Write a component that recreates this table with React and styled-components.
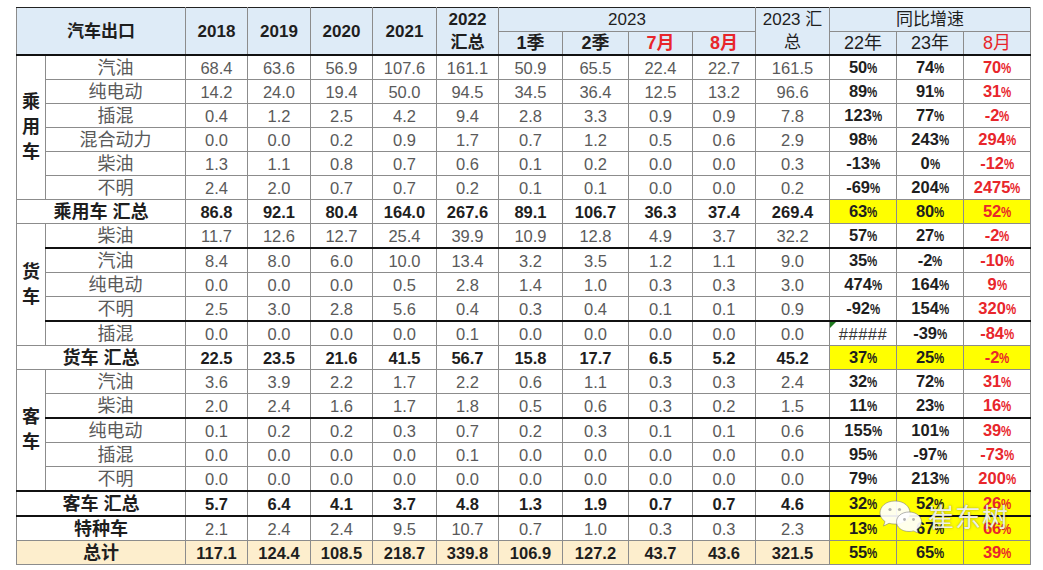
import React from 'react';
import styled, { createGlobalStyle } from 'styled-components';

const GlobalStyle = createGlobalStyle`
  html, body {
    margin: 0;
    padding: 0;
    background: #ffffff;
  }
`;

const RED = '#e8262b';
const GRID = '#8c8c8c';
const HEAD_BG = '#deebf7';
const TOTAL_BG = '#fdeecd';
const YELLOW = '#ffff00';

const widths = [29, 140, 62, 63, 62, 64, 62, 64, 66, 64, 63, 74, 67, 67, 67];

const groups = [
  {
    name: '乘用车',
    rows: [
      ['汽油', '68.4 63.6 56.9 107.6 161.1 50.9 65.5 22.4 22.7 161.5', '50 74 70'],
      ['纯电动', '14.2 24.0 19.4 50.0 94.5 34.5 36.4 12.5 13.2 96.6', '89 91 31'],
      ['插混', '0.4 1.2 2.5 4.2 9.4 2.8 3.3 0.9 0.9 7.8', '123 77 -2'],
      ['混合动力', '0.0 0.0 0.2 0.9 1.7 0.7 1.2 0.5 0.6 2.9', '98 243 294'],
      ['柴油', '1.3 1.1 0.8 0.7 0.6 0.1 0.2 0.0 0.0 0.3', '-13 0 -12'],
      ['不明', '2.4 2.0 0.7 0.7 0.2 0.1 0.1 0.0 0.0 0.2', '-69 204 2475'],
    ],
    total: ['86.8 92.1 80.4 164.0 267.6 89.1 106.7 36.3 37.4 269.4', '63 80 52'],
  },
  {
    name: '货车',
    rows: [
      ['柴油', '11.7 12.6 12.7 25.4 39.9 10.9 12.8 4.9 3.7 32.2', '57 27 -2'],
      ['汽油', '8.4 8.0 6.0 10.0 13.4 3.2 3.5 1.2 1.1 9.0', '35 -2 -10', true],
      ['纯电动', '0.0 0.0 0.0 0.5 2.8 1.4 1.0 0.3 0.3 3.0', '474 164 9'],
      ['不明', '2.5 3.0 2.8 5.6 0.4 0.3 0.4 0.1 0.1 0.9', '-92 154 320'],
      ['插混', '0.0 0.0 0.0 0.0 0.1 0.0 0.0 0.0 0.0 0.0', '##### -39 -84', true],
    ],
    total: ['22.5 23.5 21.6 41.5 56.7 15.8 17.7 6.5 5.2 45.2', '37 25 -2'],
  },
  {
    name: '客车',
    rows: [
      ['汽油', '3.6 3.9 2.2 1.7 2.2 0.6 1.1 0.3 0.3 2.4', '32 72 31'],
      ['柴油', '2.0 2.4 1.6 1.7 1.8 0.5 0.6 0.3 0.2 1.5', '11 23 16'],
      ['纯电动', '0.1 0.2 0.2 0.3 0.7 0.2 0.3 0.1 0.1 0.6', '155 101 39', true],
      ['插混', '0.0 0.0 0.0 0.0 0.1 0.0 0.0 0.0 0.0 0.0', '95 -97 -73'],
      ['不明', '0.0 0.0 0.0 0.0 0.0 0.0 0.0 0.0 0.0 0.0', '79 213 200'],
    ],
    total: ['5.7 6.4 4.1 3.7 4.8 1.3 1.9 0.7 0.7 4.6', '32 52 26'],
  },
];

const special = ['2.1 2.4 2.4 9.5 10.7 0.7 1.0 0.3 0.3 2.3', '13 67 66'];
const grand = ['117.1 124.4 108.5 218.7 339.8 106.9 127.2 43.7 43.6 321.5', '55 65 39'];

const Page = styled.div`
  padding: 7px 0 0 16px;
`;

const Frame = styled.div`
  position: relative;
  width: 1014px;
`;

const Sheet = styled.table`
  border-collapse: collapse;
  table-layout: fixed;
  width: 1014px;
  font-family: 'Liberation Sans', 'Noto Sans CJK SC', sans-serif;
  border: 1px solid #555;
`;

const HeadRow = styled.tr`
  height: 23px;
`;

const Row = styled.tr`
  height: 24px;
  & > td {
    border-top: ${(p) => (p.$thick ? '2px solid #111' : `1px solid ${GRID}`)};
  }
`;

const HeadCell = styled.th`
  background: ${HEAD_BG};
  border: 1px solid ${GRID};
  border-bottom: ${(p) => (p.$bottom ? '2px solid #111' : `1px solid ${GRID}`)};
  border-top: 1px solid #222;
  padding: 0;
  font-size: 17px;
  font-weight: ${(p) => (p.$light ? 400 : 700)};
  color: ${(p) => (p.$red ? RED : '#1e1e1e')};
  line-height: 23px;
  text-align: center;
  vertical-align: middle;
  white-space: nowrap;
`;

const SubHeadCell = styled(HeadCell)`
  border-top: 1px solid ${GRID};
  font-size: 18px;
  line-height: 22px;
`;

const CatCell = styled.td`
  border: 1px solid ${GRID};
  padding: 0;
  text-align: center;
  vertical-align: middle;
  font-size: 18px;
  font-weight: 700;
  color: #1e1e1e;
  line-height: 25px;
`;

const NameCell = styled.td`
  border: 1px solid ${GRID};
  padding: 0;
  text-align: center;
  font-size: 18px;
  font-weight: ${(p) => (p.$bold ? 700 : 400)};
  color: ${(p) => (p.$bold ? '#1e1e1e' : '#5a5a5a')};
  background: ${(p) => p.$bg || 'transparent'};
  line-height: 22px;
  white-space: nowrap;
`;

const NumCell = styled.td`
  border: 1px solid ${GRID};
  padding: 0;
  text-align: center;
  font-size: 16.5px;
  font-weight: ${(p) => (p.$bold ? 700 : 400)};
  color: ${(p) => (p.$bold ? '#1e1e1e' : '#5a5a5a')};
  background: ${(p) => p.$bg || 'transparent'};
  line-height: 22px;
`;

const GrowthCell = styled.td`
  position: relative;
  border: 1px solid ${GRID};
  padding: 0;
  text-align: center;
  font-size: 16.5px;
  font-weight: 700;
  color: ${(p) => (p.$red ? RED : '#1e1e1e')};
  background: ${(p) => (p.$yellow ? YELLOW : 'transparent')};
  line-height: 22px;
  white-space: nowrap;
`;

const Pct = styled.span`
  display: inline-block;
  font-size: 15.5px;
  transform: scaleX(0.74);
  transform-origin: left center;
  margin-right: -4px;
`;

const ErrorMark = styled.span`
  position: absolute;
  left: 0;
  top: 0;
  width: 0;
  height: 0;
  border-top: 6px solid #1f7a1f;
  border-right: 6px solid transparent;
`;

const Hashes = styled.span`
  font-weight: 400;
  color: #333;
  letter-spacing: 0.5px;
`;

const Watermark = styled.div`
  position: absolute;
  left: 862px;
  top: 490px;
  display: flex;
  align-items: center;
  gap: 4px;
  pointer-events: none;
`;

const MarkText = styled.span`
  font-family: 'Noto Sans CJK SC', sans-serif;
  font-size: 26px;
  letter-spacing: 1px;
  color: rgba(255, 255, 255, 0.9);
  text-shadow: 0 0 1px rgba(60, 60, 60, 0.5), 0 0 3px rgba(60, 60, 60, 0.3);
`;

const WeChatMark = () => (
  <svg width="46" height="34" viewBox="0 0 46 34">
    <g fill="rgba(255,255,255,0.92)" stroke="rgba(120,120,120,0.55)" strokeWidth="1">
      <path d="M17 2 C8 2 2 7.5 2 14 C2 17.5 4 20.5 7 22.5 L5.5 27 L11 24.3 C12.8 24.8 14.8 25.1 17 25.1 C26 25.1 32 19.6 32 14 C32 7.5 26 2 17 2 Z" />
      <path d="M31 13 C23.5 13 18.5 17.6 18.5 22.8 C18.5 28 23.5 32.5 31 32.5 C32.6 32.5 34.1 32.3 35.5 31.9 L40 34 L38.9 30.3 C41.7 28.6 43.5 25.9 43.5 22.8 C43.5 17.6 38.5 13 31 13 Z" />
    </g>
    <g fill="rgba(130,130,130,0.6)">
      <circle cx="12" cy="10.5" r="1.6" />
      <circle cx="21.5" cy="10.5" r="1.6" />
      <circle cx="26.5" cy="20.5" r="1.4" />
      <circle cx="35.5" cy="20.5" r="1.4" />
    </g>
  </svg>
);

const split = (s) => s.split(' ');

const growthCells = (str, yellow) =>
  split(str).map((v, i) => (
    <GrowthCell key={`g${i}`} $red={i === 2} $yellow={yellow}>
      {v === '#####' ? (
        <>
          <ErrorMark />
          <Hashes>#####</Hashes>
        </>
      ) : (
        <>
          {v}
          <Pct>%</Pct>
        </>
      )}
    </GrowthCell>
  ));

const numCells = (str, bold, bg) =>
  split(str).map((v, i) => (
    <NumCell key={`n${i}`} $bold={bold} $bg={bg}>
      {v}
    </NumCell>
  ));

const Stacked = ({ text }) =>
  text.split('').map((c, i) => (
    <React.Fragment key={i}>
      {c}
      {i < text.length - 1 && <br />}
    </React.Fragment>
  ));

export default function App() {
  return (
    <Page>
      <GlobalStyle />
      <Frame>
        <Sheet>
          <colgroup>
            {widths.map((w, i) => (
              <col key={i} style={{ width: w }} />
            ))}
          </colgroup>
          <thead>
            <HeadRow>
              <HeadCell colSpan={2} rowSpan={2} $bottom>汽车出口</HeadCell>
              <HeadCell rowSpan={2} $bottom>2018</HeadCell>
              <HeadCell rowSpan={2} $bottom>2019</HeadCell>
              <HeadCell rowSpan={2} $bottom>2020</HeadCell>
              <HeadCell rowSpan={2} $bottom>2021</HeadCell>
              <HeadCell rowSpan={2} $bottom>
                2022
                <br />
                汇总
              </HeadCell>
              <HeadCell colSpan={4} $light>2023</HeadCell>
              <HeadCell rowSpan={2} $bottom $light>
                2023 汇
                <br />
                总
              </HeadCell>
              <HeadCell colSpan={3} $light>同比增速</HeadCell>
            </HeadRow>
            <HeadRow>
              <SubHeadCell $bottom>1季</SubHeadCell>
              <SubHeadCell $bottom>2季</SubHeadCell>
              <SubHeadCell $bottom $red>7月</SubHeadCell>
              <SubHeadCell $bottom $red>8月</SubHeadCell>
              <SubHeadCell $bottom $light>22年</SubHeadCell>
              <SubHeadCell $bottom $light>23年</SubHeadCell>
              <SubHeadCell $bottom $red $light>8月</SubHeadCell>
            </HeadRow>
          </thead>
          <tbody>
            {groups.map((g) => (
              <React.Fragment key={g.name}>
                {g.rows.map(([name, nums, growth, thick], ri) => (
                  <Row key={name} $thick={thick}>
                    {ri === 0 && (
                      <CatCell rowSpan={g.rows.length}>
                        <Stacked text={g.name} />
                      </CatCell>
                    )}
                    <NameCell>{name}</NameCell>
                    {numCells(nums, false)}
                    {growthCells(growth, false)}
                  </Row>
                ))}
                <Row $thick={g.name === '客车'}>
                  <NameCell colSpan={2} $bold>
                    {g.name} 汇总
                  </NameCell>
                  {numCells(g.total[0], true)}
                  {growthCells(g.total[1], true)}
                </Row>
              </React.Fragment>
            ))}
            <Row $thick>
              <NameCell colSpan={2} $bold>特种车</NameCell>
              {numCells(special[0], false)}
              {growthCells(special[1], true)}
            </Row>
            <Row>
              <NameCell colSpan={2} $bold $bg={TOTAL_BG}>总计</NameCell>
              {numCells(grand[0], true, TOTAL_BG)}
              {growthCells(grand[1], true)}
            </Row>
          </tbody>
        </Sheet>
        <Watermark>
          <WeChatMark />
          <MarkText>崔东树</MarkText>
        </Watermark>
      </Frame>
    </Page>
  );
}
